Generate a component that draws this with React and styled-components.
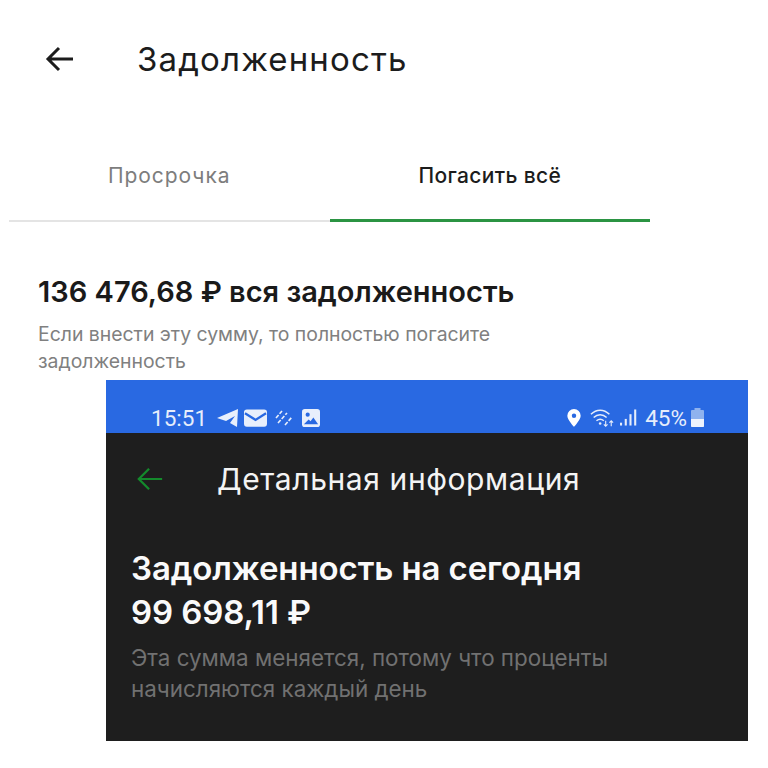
import React from "react";
import styled, { createGlobalStyle } from "styled-components";

const Global = createGlobalStyle`
  html, body { margin: 0; padding: 0; background: #fff; }
  body { font-family: "Inter", "Noto Sans", sans-serif; }
`;
const Page = styled.div`
  width: 768px; height: 768px; overflow: hidden; background: #fff;
  display: flex; flex-direction: column;
`;
const Top = styled.header`
  display: flex; align-items: center; gap: 62px;
  padding: 37px 0 1px 45px; height: 44px;
`;
const Title = styled.h1`
  margin: 0; font-weight: 400; font-size: 33px; line-height: 44px; color: #1c1c1c; letter-spacing: 1.15px;
`;
const Tabs = styled.nav`
  display: flex; width: 641px; margin: 78px 0 0 9px; border-bottom: 2px solid #e4e4e4;
`;
const Tab = styled.div`
  flex: 1; height: 62px; box-sizing: border-box; text-align: center;
  line-height: 26px; padding-top: 3px; margin-bottom: -2px;
  color: ${p => (p.$active ? "#1c1c1c" : "#7d7d7d")};
  border-bottom: 3px solid ${p => (p.$active ? "#2b9443" : "transparent")};
  font-size: 21px;
  font-weight: ${p => (p.$active ? 500 : 400)};
  letter-spacing: ${p => (p.$active ? "0.35px" : "0.95px")};
`;
const Summary = styled.section`
  padding: 52px 0 0 38px;
`;
const Amount = styled.h2`
  margin: 0; font-size: 29px; line-height: 36px; font-weight: 600; color: #1a1a1a;
`;
const Note = styled.p`
  margin: 11px 0 0; width: 490px; font-size: 19.4px; line-height: 27px; color: #808080;
`;
const Card = styled.section`
  width: 642px; margin: 5px 0 0 106px; background: #1e1e1e;
`;
const Status = styled.div`
  height: 53px; background: #2969e2; box-sizing: border-box;
  display: flex; align-items: center; justify-content: space-between;
  padding: 22px 44px 0 45px; color: #e6edfb; font-family: "Roboto", sans-serif; font-size: 22.5px;
`;
const StatusGroup = styled.div`
  display: flex; align-items: center;
`;
const StatusIcon = styled.svg`
  margin-left: ${p => p.$ml || 0}px;
  flex: none;
`;
const StatusText = styled.span`
  margin-left: ${p => p.$ml || 0}px;
`;
const DarkBar = styled.div`
  display: flex; align-items: center; gap: 53px; height: 92px; padding: 0 0 0 30px;
`;
const DarkTitle = styled.div`
  color: #f4f4f4; font-size: 30px; line-height: 36px; letter-spacing: 0.6px;
`;
const Debt = styled.div`
  padding: 21px 0 0 25px; color: #fafafa; font-size: 33px; line-height: 44px; font-weight: 600; letter-spacing: -0.1px;
`;
const DarkNote = styled.p`
  margin: 8px 0 0; padding: 0 0 37px 25px; width: 520px; color: #717171; font-size: 22.4px; line-height: 31px;
`;

const Arrow = ({ color, size, sw }) => (
  <svg width={size} height={size} viewBox="0 0 30 30" fill="none" stroke={color} strokeWidth={sw}>
    <path d="M28 15H3M14 4 3 15l11 11" />
  </svg>
);

export default function App() {
  return (
    <Page>
      <Global />
      <Top>
        <Arrow color="#1c1c1c" size={30} sw={3} />
        <Title>Задолженность</Title>
      </Top>
      <Tabs>
        <Tab>Просрочка</Tab>
        <Tab $active>Погасить всё</Tab>
      </Tabs>
      <Summary>
        <Amount>136 476,68 ₽ вся задолженность</Amount>
        <Note>Если внести эту сумму, то полностью погасите задолженность</Note>
      </Summary>
      <Card>
        <Status>
          <StatusGroup>
            <span>15:51</span>
            <StatusIcon $ml={10} width="22" height="20" viewBox="0 0 22 20" fill="#e8effc"><path d="M0 10 21 1l-1 18-7-4 5-7-9 5-9-3Z" /></StatusIcon>
            <StatusIcon $ml={5} width="23" height="18" viewBox="0 0 24 18"><rect width="24" height="18" rx="3" fill="#e8effc" /><path d="M1 4l11 7 11-7" stroke="#2969e2" strokeWidth="2.400" fill="none" /></StatusIcon>
            <StatusIcon $ml={8} width="18" height="16" viewBox="0 0 18 16" stroke="#e8effc" strokeWidth="1.600" strokeDasharray="4 1.500"><path d="M1 8 7 1M3 13 12 3M10 15 17 7" /></StatusIcon>
            <StatusIcon $ml={9} width="18" height="18" viewBox="0 0 19 19"><rect width="19" height="19" rx="3" fill="#e8effc" /><circle cx="6" cy="6" r="2.200" fill="#2969e2" /><path d="M2 16l5-5 2 2 3-4 5 7H2Z" fill="#2969e2" /></StatusIcon>
          </StatusGroup>
          <StatusGroup>
            <StatusIcon width="16" height="18" viewBox="0 0 18 20"><path fillRule="evenodd" fill="#fff" d="M9 0a7.500 7.500 0 0 1 7.500 7.500C16.500 12 9 20 9 20S1.500 12 1.500 7.500A7.500 7.500 0 0 1 9 0Zm0 5a2.500 2.500 0 1 0 0 5 2.500 2.500 0 0 0 0-5Z" /></StatusIcon>
            <StatusIcon $ml={8} width="24" height="20" viewBox="0 0 26 20" fill="none" stroke="#e6edfb" strokeWidth="1.600"><path d="M1 6c6-6 14-6 20 0M4 9.500c4-4 10-4 14 0M7 13c2.500-2 5.500-2 8 0" /><circle cx="11" cy="16" r="1.400" fill="#e6edfb" stroke="none" /><path d="M17 13v6M23 19v-6M21 15l2-2 2 2M15 17l2 2 2-2" strokeWidth="1.200" /></StatusIcon>
            <StatusIcon $ml={6} width="17" height="19" viewBox="0 0 18 19" fill="#e6edfb"><rect x="0" y="15" width="2.200" height="3" /><rect x="5" y="11" width="2.200" height="7" /><rect x="10" y="6" width="2.200" height="12" /><rect x="15" y="1" width="2.200" height="17" /></StatusIcon>
            <StatusText $ml={8}>45%</StatusText>
            <StatusIcon $ml={4} width="13" height="19" viewBox="0 0 13 19"><path d="M3.500 0h6v2H12a1 1 0 0 1 1 1v15a1 1 0 0 1-1 1H1a1 1 0 0 1-1-1V3a1 1 0 0 1 1-1h2.500Z" fill="#8fb2ee" /><path d="M0 11h13v7a1 1 0 0 1-1 1H1a1 1 0 0 1-1-1Z" fill="#eef3fd" /></StatusIcon>
          </StatusGroup>
        </Status>
        <DarkBar>
          <Arrow color="#148a2c" size={28} sw={2.400} />
          <DarkTitle>Детальная информация</DarkTitle>
        </DarkBar>
        <Debt>Задолженность на сегодня<br />99 698,11 ₽</Debt>
        <DarkNote>Эта сумма меняется, потому что проценты начисляются каждый день</DarkNote>
      </Card>
    </Page>
  );
}
